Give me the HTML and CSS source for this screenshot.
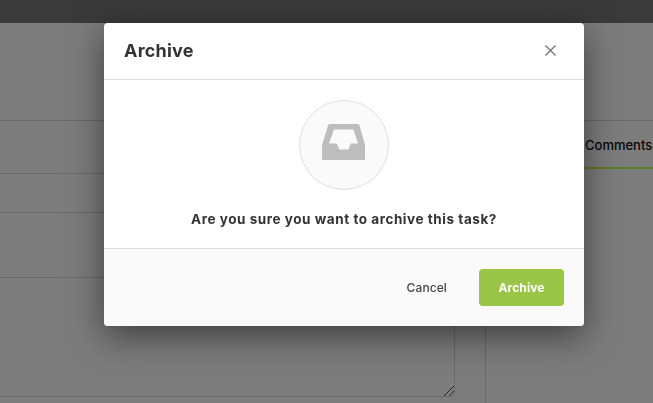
FILE: index.html
```html
<!DOCTYPE html>
<html lang="en">
<head>
  <meta charset="UTF-8" />
  <title>Archive task</title>
  <link rel="stylesheet" href="styles.css">
</head>
<body>

  <!-- Page behind the dialog -->
  <div class="topbar"></div>
  <div class="page">
    <div class="title-row"></div>
    <div class="columns">
      <div class="form-col">
        <div class="form-row row-a"></div>
        <div class="form-row row-b"></div>
        <div class="form-row row-c"></div>
        <div class="notes"></div>
      </div>
      <div class="side-col">
        <div class="tabs"><span class="tab">Comments</span></div>
      </div>
    </div>
  </div>

  <div class="overlay"></div>

  <!-- Archive dialog -->
  <div class="modal">
    <div class="modal-header">
      <h2>Archive</h2>
      <button class="close" aria-label="Close">
        <svg width="11" height="11" viewBox="0 0 11 11"><path d="M.5.5l10 10M10.500.5l-10 10" stroke="#777" stroke-width="1.4" fill="none"/></svg>
      </button>
    </div>
    <div class="modal-body">
      <div class="icon-circle">
        <svg width="43" height="36" viewBox="0 0 43 36"><path fill="#bdbdbd" fill-rule="evenodd" d="M8 0H35.500Q37 0 37.500 1.500L43 21V35Q43 36 42 36H1Q0 36 0 35V21L6 1.500Q6.500 0 8 0ZM12 5.500H31.500L36 19.500H28.700L26.300 25.500H17.300L14.700 19.500H7Z"/></svg>
      </div>
      <p>Are you sure you want to archive this task?</p>
    </div>
    <div class="modal-footer">
      <button class="btn-cancel">Cancel</button>
      <button class="btn-archive">Archive</button>
    </div>
  </div>

</body>
</html>
```

FILE: styles.css
```css
html, body {
  height: 100%;
}

body {
  margin: 0;
  overflow: hidden;
  background: #f8f8f8;
  font-family: Inter, "Liberation Sans", sans-serif;
  color: #333;
}

/* Page behind */
.topbar {
  height: 23px;
  background: #747474;
}

.title-row {
  height: 97px;
  border-bottom: 1px solid #d2d2d2;
}

.columns {
  display: flex;
}

.form-col {
  width: 455px;
  flex-shrink: 0;
}

.form-row {
  border-bottom: 1px solid #d2d2d2;
}

.row-a { height: 52px; }
.row-b { height: 38px; }
.row-c { height: 64px; }

.notes {
  height: 118px;
  border-right: 1px solid #d2d2d2;
  border-bottom: 1px solid #d2d2d2;
  border-bottom-right-radius: 4px;
  background:
    linear-gradient(135deg, transparent 48%, #555 48%, #555 54%, transparent 54%, transparent 72%, #555 72%, #555 78%, transparent 78%) no-repeat right 0 bottom 0 / 10px 10px;
}

.side-col {
  margin-left: 30px;
  flex: 1;
  height: 300px;
  border-left: 1px solid #d2d2d2;
}

.tabs {
  display: flex;
  justify-content: flex-end;
}

.tab {
  width: 68px;
  height: 46px;
  padding-left: 1px;
  line-height: 49px;
  border-bottom: 2px solid #bcf456;
  font-size: 13px;
  font-weight: 500;
  color: #111;
  white-space: nowrap;
  overflow: hidden;
}

.overlay {
  position: fixed;
  inset: 0;
  background: rgba(0, 0, 0, 0.5);
}

/* Dialog */
.modal {
  position: absolute;
  left: 104px;
  top: 23px;
  width: 480px;
  height: 303px;
  display: flex;
  flex-direction: column;
  background: #fff;
  border-radius: 4px;
  box-shadow: 0 10px 35px rgba(0, 0, 0, 0.5);
  overflow: hidden;
}

.modal-header {
  height: 54px;
  flex-shrink: 0;
  display: flex;
  align-items: center;
  justify-content: space-between;
  padding: 0 28px 2px 20px;
  border-bottom: 1px solid #dedede;
}

.modal-header h2 {
  margin: 0;
  font-size: 18px;
  font-weight: 700;
  letter-spacing: 0.2px;
}

.close {
  display: flex;
  padding: 0;
  border: none;
  background: none;
}

.modal-body {
  height: 169px;
  flex-shrink: 0;
  display: flex;
  flex-direction: column;
  align-items: center;
  padding-top: 20px;
  box-sizing: border-box;
  border-bottom: 1px solid #dedede;
}

.icon-circle {
  width: 90px;
  height: 90px;
  box-sizing: border-box;
  display: flex;
  align-items: center;
  justify-content: center;
  padding: 0 1px 6px 0;
  border: 1px solid #dedede;
  border-radius: 50%;
  background: #fafafa;
}

.modal-body p {
  margin: 20px 0 0;
  font-size: 13.5px;
  line-height: 18px;
  font-weight: 700;
  letter-spacing: 0.55px;
}

.modal-footer {
  flex: 1;
  display: flex;
  align-items: center;
  justify-content: flex-end;
  gap: 32px;
  padding: 0 20px;
  background: #fafafa;
}

.modal-footer button {
  border: none;
  font-family: inherit;
  font-size: 12px;
}

.btn-cancel {
  padding: 0;
  background: none;
  color: #444;
  font-weight: 500;
  letter-spacing: 0.1px;
}

.btn-archive {
  width: 85px;
  height: 37px;
  background: #9bc547;
  border-radius: 4px;
  color: #fff;
  font-weight: 700;
  letter-spacing: 0.1px;
}
```
